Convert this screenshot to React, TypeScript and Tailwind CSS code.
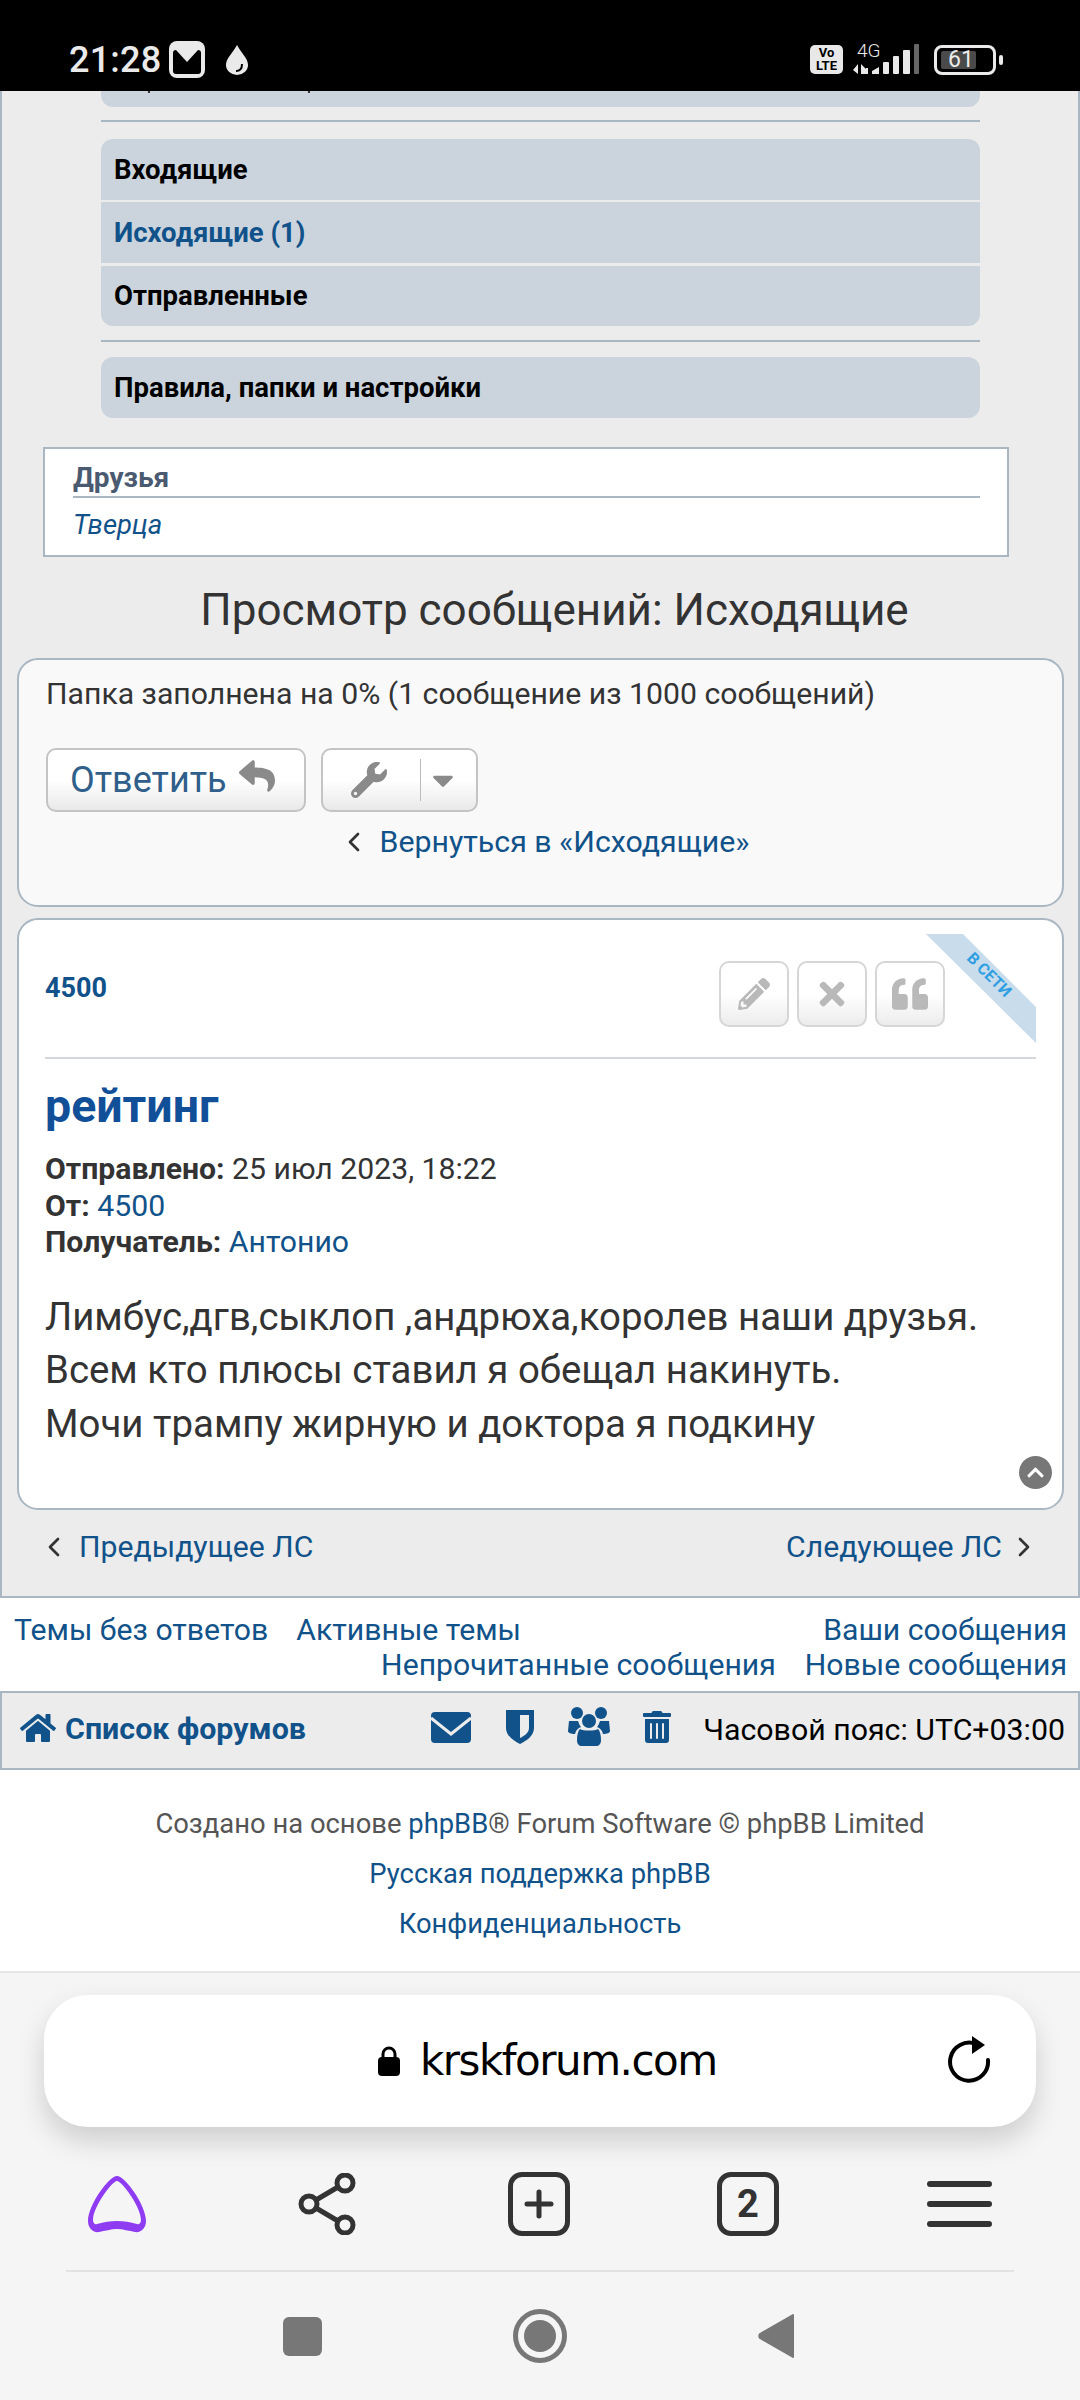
import { FaHome, FaTrashAlt, FaPencilAlt, FaTimes, FaQuoteLeft, FaReply, FaWrench, FaCaretDown, FaChevronUp } from 'react-icons/fa'
import { FiChevronLeft, FiChevronRight } from 'react-icons/fi'

const LINK = 'text-[#105289]'

function MenuRow({ children, className }: { children: React.ReactNode; className: string }) {
  return (
    <div className={`bg-[#cbd4dc] pl-[13px] flex items-center text-[27.5px] font-bold ${className}`}>
      {children}
    </div>
  )
}

function PostButton({ children }: { children: React.ReactNode }) {
  return (
    <div className="w-[70px] h-[66px] rounded-[10px] border-2 border-[#d6d6d6] bg-linear-to-b from-white from-50% to-[#ececec] flex items-center justify-center text-[#b9b9b9]">
      {children}
    </div>
  )
}

function StatusBar() {
  return (
    <div className="h-[91px] shrink-0 bg-black flex items-center justify-between pt-[28px] pl-[69px] pr-[77px] text-[#eaeaea]">
      <div className="flex items-center">
        <span className="text-[36px] leading-[42px] font-medium tracking-[0.2px]">21:28</span>
        <svg width="36" height="37" viewBox="0 0 36 37" className="ml-[8px]">
          <rect x="0" y="0" width="36" height="37" rx="8" fill="#eaeaea" />
          <rect x="4" y="9" width="28" height="24" rx="3" fill="#000" />
          <path d="M7 3h22v6L18 21 7 9z" fill="#eaeaea" />
        </svg>
        <svg width="26" height="32" viewBox="0 0 26 32" className="ml-[19px]">
          <path d="M13 1C9 9 2 14 2 21a11 10 0 0 0 22 0C24 14 17 9 13 1z" fill="#eaeaea" />
          <path d="M18 20c0 4-2 7-6 7" stroke="#000" strokeWidth="2" fill="none" />
        </svg>
      </div>
      <div className="flex items-center">
        <div className="w-[33px] h-[29px] rounded-[5px] bg-[#e8e8e8] text-black text-[13px] leading-[12.5px] font-bold flex flex-col items-center justify-center">
          <span>Vo</span>
          <span>LTE</span>
        </div>
        <div className="relative w-[67px] h-[32px] ml-[10px]">
          <span className="absolute left-[4px] -top-[3px] text-[19px] leading-[20px] font-light">4G</span>
          <svg width="67" height="32" viewBox="0 0 67 32">
            <path d="M0 26l5-6v10zM8 20l5 5v-1h2v6H8z" fill="#eaeaea" />
            <path d="M19 30v-3l7-4v7z" fill="#eaeaea" />
            <rect x="30" y="18" width="6" height="12" rx="1" fill="#eaeaea" />
            <rect x="40" y="12" width="6" height="18" rx="1" fill="#eaeaea" />
            <rect x="50" y="6" width="7" height="24" rx="1" fill="#eaeaea" />
            <rect x="61" y="0" width="5" height="30" rx="1" fill="#666" />
          </svg>
        </div>
        <div className="relative w-[62px] h-[30px] ml-[14px] rounded-[8px] border-[3px] border-[#eaeaea] flex items-center">
          <div className="absolute left-[4px] top-[3px] bottom-[3px] w-[35px] rounded-[2px] bg-[#4a4a4a]" />
          <span className="relative w-full text-center text-[23px] leading-[24px] pr-[8px]">61</span>
        </div>
        <div className="w-[4px] h-[10px] ml-[3px] rounded-[2px] bg-[#eaeaea]" />
      </div>
    </div>
  )
}

function Forum() {
  return (
    <div className="h-[1507px] shrink-0 border-x-2 border-b-2 border-[#a9b7c3] bg-[#ececed] flex flex-col">
      <div className="relative ml-[99px] w-[879px] h-[16px] rounded-b-[12px] bg-[#cbd4dc]">
        <div className="absolute left-[47px] top-0 w-[2px] h-[2px] bg-[#333]" />
        <div className="absolute left-[207px] top-0 w-[2px] h-[2px] bg-[#333]" />
      </div>
      <div className="ml-[99px] w-[879px] h-[2px] mt-[13px] bg-[#a9b7c3]" />
      <div className="ml-[99px] w-[879px] mt-[17px] flex flex-col">
        <MenuRow className="h-[61px] rounded-t-[12px] text-black">Входящие</MenuRow>
        <MenuRow className={`h-[61px] mt-[2px] ${LINK}`}>Исходящие (1)</MenuRow>
        <MenuRow className="mt-[3px] h-[60px] rounded-b-[12px] text-black">Отправленные</MenuRow>
        <div className="h-[2px] mt-[14px] bg-[#a9b7c3]" />
        <MenuRow className="h-[61px] mt-[15px] rounded-[12px] text-black">Правила, папки и настройки</MenuRow>
      </div>

      <div className="ml-[41px] w-[966px] h-[110px] mt-[29px] border-2 border-[#a9b7c3] bg-white pl-[28px] pr-[27px] pt-[13px]">
        <div className="h-[36px] border-b-2 border-[#a9b7c3] text-[28px] leading-[32px] font-bold text-[#4a5a70]">Друзья</div>
        <div className={`mt-[11px] text-[27.5px] leading-[32px] italic ${LINK}`}>Тверца</div>
      </div>

      <h1 className="mt-[30px] h-[46px] text-center text-[44px] leading-[46px] text-[#333] pl-[29px]">Просмотр сообщений: Исходящие</h1>

      <div className="ml-[15px] w-[1047px] h-[249px] mt-[25px] rounded-[21px] border-2 border-[#a9b7c3] bg-[#f9f9f9] pl-[27px] pt-[17px] flex flex-col">
        <div className="text-[30.2px] leading-[34px] text-[#333]">Папка заполнена на 0% (1 сообщение из 1000 сообщений)</div>
        <div className="flex mt-[37px]">
          <div className="w-[260px] h-[64px] rounded-[10px] border-2 border-[#c4c4c4] bg-linear-to-b from-white from-50% to-[#e9e9e9] pl-[22px] flex items-center text-[36px] text-[#2f5f8a]">
            Ответить
            <FaReply className="ml-[12px] mb-[8px] text-[#8a8a8a]" size={36} />
          </div>
          <div className="ml-[15px] w-[157px] h-[64px] rounded-[10px] border-2 border-[#c4c4c4] bg-linear-to-b from-white from-50% to-[#e9e9e9] pl-[28px] flex items-center text-[#8a8a8a]">
            <FaWrench size={36} />
            <div className="w-px h-[42px] ml-[33px] bg-[#bbb]" />
            <FaCaretDown className="ml-[5px]" size={34} />
          </div>
        </div>
        <div className="flex items-center justify-center mt-[12px] pr-[21px]">
          <FiChevronLeft size={32} className="text-[#333]" />
          <span className={`ml-[10px] text-[30.3px] leading-[36px] ${LINK}`}>Вернуться в «Исходящие»</span>
        </div>
      </div>

      <div className="relative ml-[15px] w-[1047px] h-[592px] mt-[11px] rounded-[21px] border-2 border-[#a9b7c3] bg-white pl-[26px] pr-[26px] flex flex-col">
        <div className="absolute left-[907px] top-[14px] w-[110px] h-[109px] bg-[#c9dcec] [clip-path:polygon(0_0,37px_0,110px_73px,110px_109px)]" />
        <span className="absolute left-[932px] top-[47px] w-[76px] text-center text-[16px] leading-[16px] font-bold text-[#2f9fe2] rotate-45">В СЕТИ</span>
        <div className="relative h-[139px] border-b-2 border-[#d4d8dd] flex">
          <span className={`mt-[52px] text-[27px] leading-[32px] font-bold ${LINK}`}>4500</span>
          <div className="absolute left-[674px] top-[41px] flex gap-[8px]">
            <PostButton><FaPencilAlt size={32} /></PostButton>
            <PostButton><FaTimes size={36} /></PostButton>
            <PostButton><FaQuoteLeft size={36} /></PostButton>
          </div>
        </div>
        <h2 className="mt-[21px] text-[46.5px] leading-[52px] font-bold text-[#115098]">рейтинг</h2>
        <div className="mt-[19px] text-[30.2px] leading-[36.5px] text-[#333]">
          <div><b>Отправлено:</b> 25 июл 2023, 18:22</div>
          <div><b>От:</b> <span className={LINK}>4500</span></div>
          <div><b>Получатель:</b> <span className={LINK}>Антонио</span></div>
        </div>
        <div className="mt-[29px] text-[38.4px] leading-[53.5px] text-[#333]">
          <div>Лимбус,дгв,сыклоп ,андрюха,королев наши друзья.</div>
          <div>Всем кто плюсы ставил я обещал накинуть.</div>
          <div>Мочи трампу жирную и доктора я подкину</div>
        </div>
        <div className="absolute left-[1000px] top-[536px] w-[33px] h-[33px] rounded-full bg-[#777] flex items-center justify-center text-white">
          <FaChevronUp size={19} />
        </div>
      </div>

      <div className="flex items-center justify-between mt-[19px] pl-[36px] pr-[38px]">
        <div className="flex items-center">
          <FiChevronLeft size={32} className="text-[#333]" />
          <span className={`ml-[9px] text-[30.2px] leading-[36px] ${LINK}`}>Предыдущее ЛС</span>
        </div>
        <div className="flex items-center">
          <span className={`mr-[6px] text-[30.2px] leading-[36px] ${LINK}`}>Следующее ЛС</span>
          <FiChevronRight size={32} className="text-[#333]" />
        </div>
      </div>
    </div>
  )
}

function QuickLinks() {
  return (
    <div className={`h-[93px] shrink-0 bg-white pl-[14px] pr-[13px] pt-[14px] text-[30.2px] leading-[35px] ${LINK}`}>
      <div className="flex justify-between">
        <div className="flex gap-[28px]">
          <span>Темы без ответов</span>
          <span>Активные темы</span>
        </div>
        <span>Ваши сообщения</span>
      </div>
      <div className="flex justify-end gap-[29px]">
        <span>Непрочитанные сообщения</span>
        <span>Новые сообщения</span>
      </div>
    </div>
  )
}

function NavBar() {
  return (
    <div className="h-[79px] shrink-0 border-2 border-[#a9b7c3] bg-[#ececed] flex items-center pl-[18px] pr-[13px]">
      <FaHome size={36} className={`${LINK} mb-[6px]`} />
      <span className={`ml-[9px] text-[30.4px] font-bold mb-[4px] ${LINK}`}>Список форумов</span>
      <svg width="40" height="31" viewBox="0 0 40 31" className="ml-[125px] mb-[6px]">
        <rect width="40" height="31" rx="4" fill="#105289" />
        <path d="M0 6l20 16L40 6" stroke="#ececed" strokeWidth="3" fill="none" />
      </svg>
      <svg width="28" height="34" viewBox="0 0 28 34" className="ml-[35px] mb-[8px]">
        <path d="M0 0h28v18c0 8-8 13-14 16C8 31 0 26 0 18z" fill="#105289" />
        <path d="M14 5h9v13c0 5-5 8-9 10z" fill="#ececed" />
      </svg>
      <svg width="42" height="39" viewBox="0 0 42 39" className="ml-[34px] mb-[8px]" fill="#105289">
        <circle cx="9" cy="6" r="6" />
        <circle cx="33" cy="6" r="6" />
        <path d="M1 14h9c1 3 2 5 3 6-3 1-5 3-6 7-4 0-7-1-7-3z" />
        <path d="M41 14h-9c-1 3-2 5-3 6 3 1 5 3 6 7 4 0 7-1 7-3z" />
        <circle cx="21" cy="14" r="7" />
        <path d="M12 22c3 2 15 2 18 0 2 2 3 6 3 11 0 4-2 6-5 6H14c-3 0-5-2-5-6 0-5 1-9 3-11z" />
      </svg>
      <FaTrashAlt size={32} className={`ml-[31px] mb-[8px] ${LINK}`} />
      <span className="ml-auto text-[30.3px] text-black mb-[2px]">Часовой пояс: UTC+03:00</span>
    </div>
  )
}

function Footer() {
  return (
    <div className="h-[203px] shrink-0 bg-white border-b-2 border-[#e6e6e6] pt-[29px] text-center text-[27.4px] leading-[50px] text-[#555]">
      <div>Создано на основе <span className={LINK}>phpBB</span>® Forum Software © phpBB Limited</div>
      <div className={LINK}>Русская поддержка phpBB</div>
      <div className={LINK}>Конфиденциальность</div>
    </div>
  )
}

function BrowserChrome() {
  return (
    <div className="flex-1 bg-[#f5f5f5] flex flex-col items-center">
      <div className="relative w-[992px] h-[132px] mt-[22px] rounded-[44px] bg-white shadow-[0_14px_28px_rgba(0,0,0,0.16)] pl-[334px] flex items-center">
        <svg width="22" height="30" viewBox="0 0 22 30" className="mr-[20px]">
          <path d="M5 12V8a6 6 0 0 1 12 0v4" stroke="#000" strokeWidth="3" fill="none" />
          <rect x="0" y="11" width="22" height="19" rx="4" fill="#000" />
        </svg>
        <span className="text-[42px] leading-[50px] text-black font-['DejaVu_Sans'] tracking-[-1.5px]">krskforum.com</span>
        <svg width="44" height="48" viewBox="0 0 44 48" className="absolute right-[44px] top-[41px]">
          <path d="M28 8A19 19 0 1 0 40 24" stroke="#000" strokeWidth="4" fill="none" strokeLinecap="round" />
          <path d="M24 0l13 9-13 9z" fill="#000" />
        </svg>
      </div>
      <div className="w-full mt-[45px] pl-[87px] h-[64px] flex items-center">
        <svg width="60" height="58" viewBox="0 0 60 58">
          <path
            fillRule="evenodd"
            fill="#8e3bf2"
            d="M30 1C22 1 1 30 1 46c0 7 5 12 11 11 6-1 12-3 18-3s12 2 18 3c6 1 11-4 11-11C59 30 38 1 30 1zM30 6C25 6 6 32 6 45c0 3 2 5 4 4 7-2 13-3 20-3s13 1 20 3c2 1 4-1 4-4C54 32 35 6 30 6z"
          />
        </svg>
        <svg width="58" height="62" viewBox="0 0 58 62" stroke="#333" strokeWidth="5" fill="none" className="ml-[151px]">
          <circle cx="11" cy="31" r="8" />
          <circle cx="47" cy="10" r="8" />
          <circle cx="47" cy="52" r="8" />
          <path d="M18 27l22-13M18 35l22 13" />
        </svg>
        <div className="ml-[152px] w-[62px] h-[64px] rounded-[14px] border-[5px] border-[#333] flex items-center justify-center">
          <svg width="30" height="30" viewBox="0 0 30 30" stroke="#333" strokeWidth="5" strokeLinecap="round">
            <path d="M15 3v24M3 15h24" />
          </svg>
        </div>
        <div className="ml-[147px] w-[62px] h-[64px] rounded-[14px] border-[5px] border-[#333] flex items-center justify-center text-[38px] leading-none font-bold text-[#333]">2</div>
        <div className="ml-[148px] w-[65px] flex flex-col gap-[14px]">
          <div className="h-[6px] rounded-full bg-[#333]" />
          <div className="h-[6px] rounded-full bg-[#333]" />
          <div className="h-[6px] rounded-full bg-[#333]" />
        </div>
      </div>
      <div className="w-[948px] h-[2px] mt-[34px] bg-[#e2e2e2]" />
      <div className="w-full mt-[37px] pl-[283px] pr-[285px] flex items-center justify-between">
        <div className="w-[39px] h-[39px] rounded-[6px] bg-[#777]" />
        <div className="w-[54px] h-[54px] rounded-full border-[5px] border-[#777] flex items-center justify-center">
          <div className="w-[32px] h-[32px] rounded-full bg-[#777]" />
        </div>
        <svg width="37" height="46" viewBox="0 0 37 46">
          <path d="M35 2v42L2 25c-1-1-1-3 0-4z" fill="#777" stroke="#777" strokeWidth="2" strokeLinejoin="round" />
        </svg>
      </div>
    </div>
  )
}

export default function App() {
  return (
    <div className="w-[1080px] h-[2400px] overflow-hidden flex flex-col bg-white font-['Roboto',sans-serif]">
      <StatusBar />
      <Forum />
      <QuickLinks />
      <NavBar />
      <Footer />
      <BrowserChrome />
    </div>
  )
}
